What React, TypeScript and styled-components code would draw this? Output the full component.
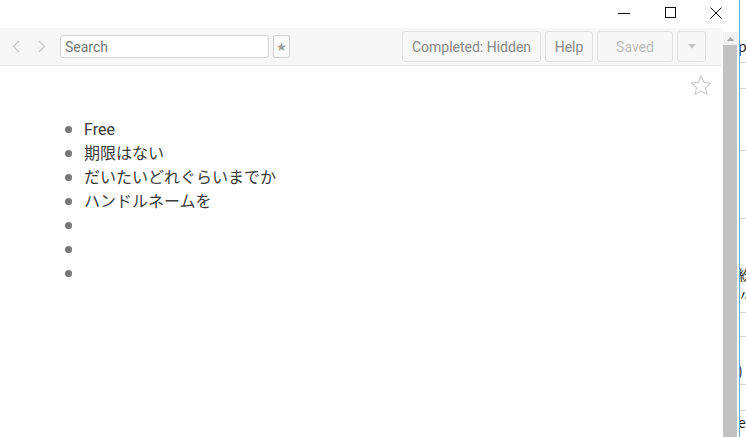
import React from 'react';
import styled, { createGlobalStyle } from 'styled-components';

const GlobalStyle = createGlobalStyle`
  html, body {
    margin: 0;
    padding: 0;
    background: #ffffff;
  }
  body {
    font-family: Roboto, "Noto Sans CJK JP", sans-serif;
    overflow: hidden;
  }
`;

const items = ['Free', '期限はない', 'だいたいどれぐらいまでか', 'ハンドルネームを', '', '', ''];

function App() {
  return (
    <>
      <GlobalStyle />
      <Screen>
        <Window>
          <TitleBar>
            <WinButton>
              <svg width="12" height="12" viewBox="0 0 12 12">
                <path d="M0 6.5h12" stroke="#111" strokeWidth="1" />
              </svg>
            </WinButton>
            <WinButton>
              <svg width="11" height="11" viewBox="0 0 11 11">
                <rect x="0.5" y="0.5" width="10" height="10" fill="none" stroke="#111" strokeWidth="1" />
              </svg>
            </WinButton>
            <WinButton>
              <svg width="12" height="12" viewBox="0 0 12 12">
                <path d="M0.5 0.5l11 11M11.5 0.5l-11 11" stroke="#111" strokeWidth="1" />
              </svg>
            </WinButton>
          </TitleBar>
          <Body>
            <Main>
              <Toolbar>
                <NavGroup>
                  <NavArrow>
                    <svg width="8" height="13" viewBox="0 0 8 13">
                      <path d="M7 1L1.5 6.5L7 12" fill="none" stroke="#cfcfcf" strokeWidth="1.5" />
                    </svg>
                  </NavArrow>
                  <NavArrow>
                    <svg width="8" height="13" viewBox="0 0 8 13">
                      <path d="M1 1L6.5 6.5L1 12" fill="none" stroke="#cfcfcf" strokeWidth="1.5" />
                    </svg>
                  </NavArrow>
                </NavGroup>
                <SearchInput placeholder="Search" />
                <StarButton>★</StarButton>
                <Spacer />
                <ToolButton $width={139}>Completed: Hidden</ToolButton>
                <ToolButton $width={48}>Help</ToolButton>
                <ToolButton $muted $width={76}>Saved</ToolButton>
                <ToolButton $muted $width={29}>
                  <svg width="8" height="5" viewBox="0 0 8 5">
                    <path d="M0 0h8L4 4.5z" fill="#c4c4c4" />
                  </svg>
                </ToolButton>
              </Toolbar>
              <Content>
                <StarRow>
                  <svg width="22" height="21" viewBox="0 0 24 23">
                    <path
                      d="M12 1.2l3.1 6.9 7.4.7-5.6 5 1.6 7.4L12 17.4l-6.5 3.8 1.6-7.4-5.6-5 7.4-.7z"
                      fill="none"
                      stroke="#c8c8c8"
                      strokeWidth="1.2"
                      strokeLinejoin="round"
                    />
                  </svg>
                </StarRow>
                <List>
                  {items.map((text, i) => (
                    <Item key={i}>{text}</Item>
                  ))}
                </List>
              </Content>
            </Main>
            <Scrollbar>
              <ScrollArrow>
                <svg width="7" height="4" viewBox="0 0 7 4">
                  <path d="M3.5 0L7 4H0z" fill="#a3a3a3" />
                </svg>
              </ScrollArrow>
              <Thumb />
            </Scrollbar>
          </Body>
        </Window>
        <OtherWindow>
          <Fragment $top={38}>p</Fragment>
          <Rule $top={62} />
          <Rule $top={88} />
          <Rule $top={150} />
          <Rule $top={218} />
          <Fragment $top={266}>紛</Fragment>
          <Fragment $top={286}>〃</Fragment>
          <Rule $top={312} />
          <Rule $top={336} />
          <Fragment $top={362}>)</Fragment>
          <Rule $top={384} />
          <Rule $top={410} />
          <Fragment $top={414}>e</Fragment>
        </OtherWindow>
      </Screen>
    </>
  );
}

const Screen = styled.div`
  display: flex;
  width: 746px;
  height: 437px;
  overflow: hidden;
`;

const Window = styled.div`
  width: 739px;
  height: 437px;
  display: flex;
  flex-direction: column;
  background: #ffffff;
  flex-shrink: 0;
`;

const TitleBar = styled.div`
  height: 28px;
  display: flex;
  justify-content: flex-end;
  background: #ffffff;
`;

const WinButton = styled.div`
  width: 46px;
  height: 25px;
  display: flex;
  align-items: center;
  justify-content: center;
  svg { display: block; }
`;

const Body = styled.div`
  flex: 1;
  display: flex;
  min-height: 0;
`;

const Main = styled.div`
  width: 722px;
  display: flex;
  flex-direction: column;
`;

const Toolbar = styled.div`
  height: 37px;
  display: flex;
  align-items: center;
  gap: 4px;
  padding: 0 16px 0 3px;
  background: #f7f7f7;
  border-bottom: 1px solid #e2e2e2;
`;

const NavGroup = styled.div`
  display: flex;
  align-items: center;
  margin-right: 2px;
`;

const NavArrow = styled.div`
  width: 26px;
  height: 22px;
  display: flex;
  align-items: center;
  justify-content: center;
  svg { display: block; }
`;

const SearchInput = styled.input`
  box-sizing: border-box;
  width: 209px;
  height: 23px;
  margin-left: -1px;
  padding: 0 4px;
  border: 1px solid #d3d3d3;
  border-radius: 3px;
  background: #ffffff;
  font-family: Roboto, sans-serif;
  font-size: 14px;
  color: #333;
  outline: none;
  &::placeholder { color: #777; }
`;

const StarButton = styled.div`
  box-sizing: border-box;
  width: 17px;
  height: 23px;
  border: 1px solid #cfcfcf;
  border-radius: 2px;
  background: #fbfbfb;
  display: flex;
  align-items: center;
  justify-content: center;
  font-size: 12px;
  color: #9a9a9a;
  font-family: "DejaVu Sans", sans-serif;
`;

const Spacer = styled.div`
  flex: 1;
`;

const ToolButton = styled.div<{ $muted?: boolean; $width: number }>`
  box-sizing: border-box;
  height: 31px;
  width: ${p => p.$width}px;
  display: flex;
  align-items: center;
  justify-content: center;
  border: 1px solid #e0e0e0;
  border-radius: 3px;
  background: #f7f7f7;
  font-size: 14px;
  color: ${p => (p.$muted ? '#bdbdbd' : '#8a8a8a')};
  white-space: nowrap;
  svg { display: block; }
`;

const Content = styled.div`
  flex: 1;
  padding: 9px 10px 0 0;
`;

const StarRow = styled.div`
  display: flex;
  justify-content: flex-end;
  svg { display: block; }
`;

const List = styled.ul`
  list-style: none;
  margin: 22px 0 0;
  padding: 0 0 0 84px;
`;

const Item = styled.li`
  position: relative;
  min-height: 24px;
  line-height: 24px;
  font-size: 16px;
  color: #3a3a3a;
  &::before {
    content: '';
    position: absolute;
    left: -19px;
    top: 8px;
    width: 7px;
    height: 7px;
    border-radius: 50%;
    background: #777777;
  }
`;

const Scrollbar = styled.div`
  width: 17px;
  display: flex;
  flex-direction: column;
  align-items: center;
  padding-top: 4px;
  background: #ffffff;
`;

const ScrollArrow = styled.div`
  width: 15px;
  height: 13px;
  display: flex;
  align-items: center;
  justify-content: center;
  background: #f0f0f0;
  svg { display: block; }
`;

const Thumb = styled.div`
  flex: 1;
  width: 14px;
  margin-left: -1px;
  background: #c2c2c2;
`;

const OtherWindow = styled.div`
  position: relative;
  flex: 1;
  background: #ffffff;
  border-left: 1px solid #6aa7d6;
  overflow: hidden;
`;

const Rule = styled.div<{ $top: number }>`
  position: absolute;
  left: 0;
  right: 0;
  top: ${p => p.$top}px;
  height: 1px;
  background: #d4d4d4;
`;

const Fragment = styled.div<{ $top: number }>`
  position: absolute;
  left: -2px;
  top: ${p => p.$top}px;
  font-size: 14px;
  line-height: 16px;
  color: #222;
  font-family: "Noto Sans CJK JP", sans-serif;
`;

export default App;
